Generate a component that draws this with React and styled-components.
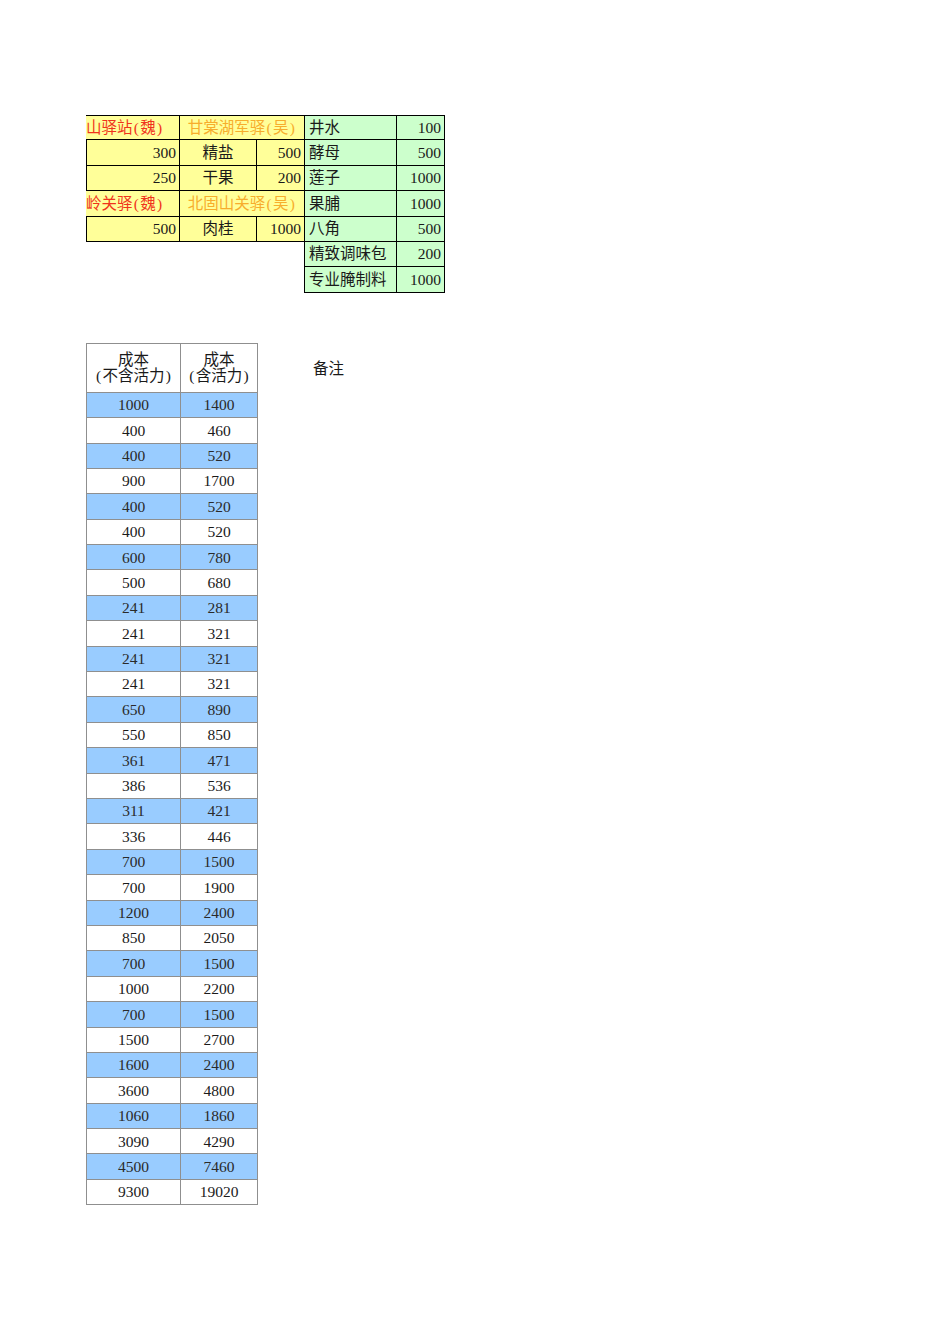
import React from 'react'
import styled, { createGlobalStyle } from 'styled-components'

const GlobalStyle = createGlobalStyle`
  html, body {
    margin: 0;
    padding: 0;
    background: #fff;
  }
  body {
    font-family: "Liberation Serif", "Noto Sans CJK SC", serif;
    font-size: 15.5px;
    color: #1a1a1a;
  }
`

const Page = styled.div`
  width: 950px;
  min-height: 1344px;
  box-sizing: border-box;
  padding: 115px 0 0 86px;
  display: flex;
  flex-direction: column;
  gap: 50px;
`

const PriceGrid = styled.div`
  display: grid;
  grid-template-columns: 94px 77px 47px 93px 48px;
  grid-auto-rows: 25.4px;
  width: 359px;
`

const Cell = styled.div`
  box-sizing: border-box;
  display: flex;
  align-items: center;
  padding: 0 3px;
  white-space: nowrap;
  overflow: hidden;
  line-height: 1;
  grid-column: ${p => p.$span ? `span ${p.$span}` : 'auto'};
  justify-content: ${p => p.$align === 'right' ? 'flex-end' : p.$align === 'center' ? 'center' : 'flex-start'};
  border-top: ${p => p.$top ? '1px solid #000' : 'none'};
  border-left: ${p => p.$left ? '1px solid #000' : 'none'};
`

const YellowCell = styled(Cell)`
  background: #ffff99;
  border-bottom: 1px solid #000;
  border-right: ${p => p.$noRight ? 'none' : '1px solid #000'};
  color: ${p => p.$tone === 'red' ? '#f0341c' : p.$tone === 'orange' ? '#f7ad2c' : '#1a1a1a'};
  padding-left: ${p => p.$tone === 'red' ? '0' : '3px'};
`

const GreenCell = styled(Cell)`
  background: #ccffcc;
  border-bottom: 1px solid #000;
  border-right: 1px solid #000;
  padding-left: 4px;
`

const Blank = styled.div`
  grid-column: span 3;
`

// half-width bracket like the sheet's font draws it
const Paren = styled.span`
  display: inline-block;
  width: 0.5em;
  text-align: center;
`

const Lower = styled.div`
  display: flex;
  align-items: flex-start;
  gap: 55px;
`

const CostGrid = styled.div`
  display: grid;
  grid-template-columns: 94px 77px;
  grid-template-rows: 49px;
  grid-auto-rows: 25.4px;
  border-top: 1px solid #8f8f8f;
  border-left: 1px solid #8f8f8f;
`

const CostCell = styled.div`
  box-sizing: border-box;
  display: flex;
  align-items: center;
  justify-content: center;
  line-height: 1;
  border-right: 1px solid #8f8f8f;
  border-bottom: 1px solid #8f8f8f;
  background: ${p => p.$blue ? '#99ccff' : '#fff'};
  color: ${p => p.$blue ? '#2a2a2a' : '#1a1a1a'};
`

const HeadCell = styled(CostCell)`
  flex-direction: column;
  line-height: 16px;
  text-align: center;
`

const Remark = styled.div`
  height: 49px;
  display: flex;
  align-items: center;
`

const withParens = text =>
  text.split(/([()])/).filter(Boolean).map((part, i) =>
    part === '(' || part === ')' ? <Paren key={i}>{part}</Paren> : part
  )

const priceRows = [
  { kind: 'head', wei: '山驿站(魏)', wu: '甘棠湖军驿(吴)', name: '井水', qty: '100' },
  { kind: 'item', a: '300', item: '精盐', b: '500', name: '酵母', qty: '500' },
  { kind: 'item', a: '250', item: '干果', b: '200', name: '莲子', qty: '1000' },
  { kind: 'head', wei: '岭关驿(魏)', wu: '北固山关驿(吴)', name: '果脯', qty: '1000' },
  { kind: 'item', a: '500', item: '肉桂', b: '1000', name: '八角', qty: '500' },
  { kind: 'blank', name: '精致调味包', qty: '200' },
  { kind: 'blank', name: '专业腌制料', qty: '1000' },
]

const costs = [
  ['1000', '1400'], ['400', '460'], ['400', '520'], ['900', '1700'],
  ['400', '520'], ['400', '520'], ['600', '780'], ['500', '680'],
  ['241', '281'], ['241', '321'], ['241', '321'], ['241', '321'],
  ['650', '890'], ['550', '850'], ['361', '471'], ['386', '536'],
  ['311', '421'], ['336', '446'], ['700', '1500'], ['700', '1900'],
  ['1200', '2400'], ['850', '2050'], ['700', '1500'], ['1000', '2200'],
  ['700', '1500'], ['1500', '2700'], ['1600', '2400'], ['3600', '4800'],
  ['1060', '1860'], ['3090', '4290'], ['4500', '7460'], ['9300', '19020'],
]

const renderLeft = (row, i) => {
  const top = i === 0
  if (row.kind === 'head') {
    return [
      <YellowCell key="w" $top={top} $tone="red">{withParens(row.wei)}</YellowCell>,
      <YellowCell key="u" $top={top} $span={2} $align="center" $tone="orange" $noRight>{withParens(row.wu)}</YellowCell>,
    ]
  }
  if (row.kind === 'item') {
    return [
      <YellowCell key="a" $left $align="right">{row.a}</YellowCell>,
      <YellowCell key="i" $align="center">{row.item}</YellowCell>,
      <YellowCell key="b" $align="right" $noRight>{row.b}</YellowCell>,
    ]
  }
  return [<Blank key="x" />]
}

export default function App () {
  return (
    <Page>
      <GlobalStyle />
      <PriceGrid>
        {priceRows.map((row, i) => (
          <React.Fragment key={i}>
            {renderLeft(row, i)}
            <GreenCell $top={i === 0} $left>{row.name}</GreenCell>
            <GreenCell $top={i === 0} $align="right">{row.qty}</GreenCell>
          </React.Fragment>
        ))}
      </PriceGrid>
      <Lower>
        <CostGrid>
          <HeadCell><span>成本</span><span>{withParens('(不含活力)')}</span></HeadCell>
          <HeadCell><span>成本</span><span>{withParens('(含活力)')}</span></HeadCell>
          {costs.map(([a, b], i) => (
            <React.Fragment key={i}>
              <CostCell $blue={i % 2 === 0}>{a}</CostCell>
              <CostCell $blue={i % 2 === 0}>{b}</CostCell>
            </React.Fragment>
          ))}
        </CostGrid>
        <Remark>备注</Remark>
      </Lower>
    </Page>
  )
}
